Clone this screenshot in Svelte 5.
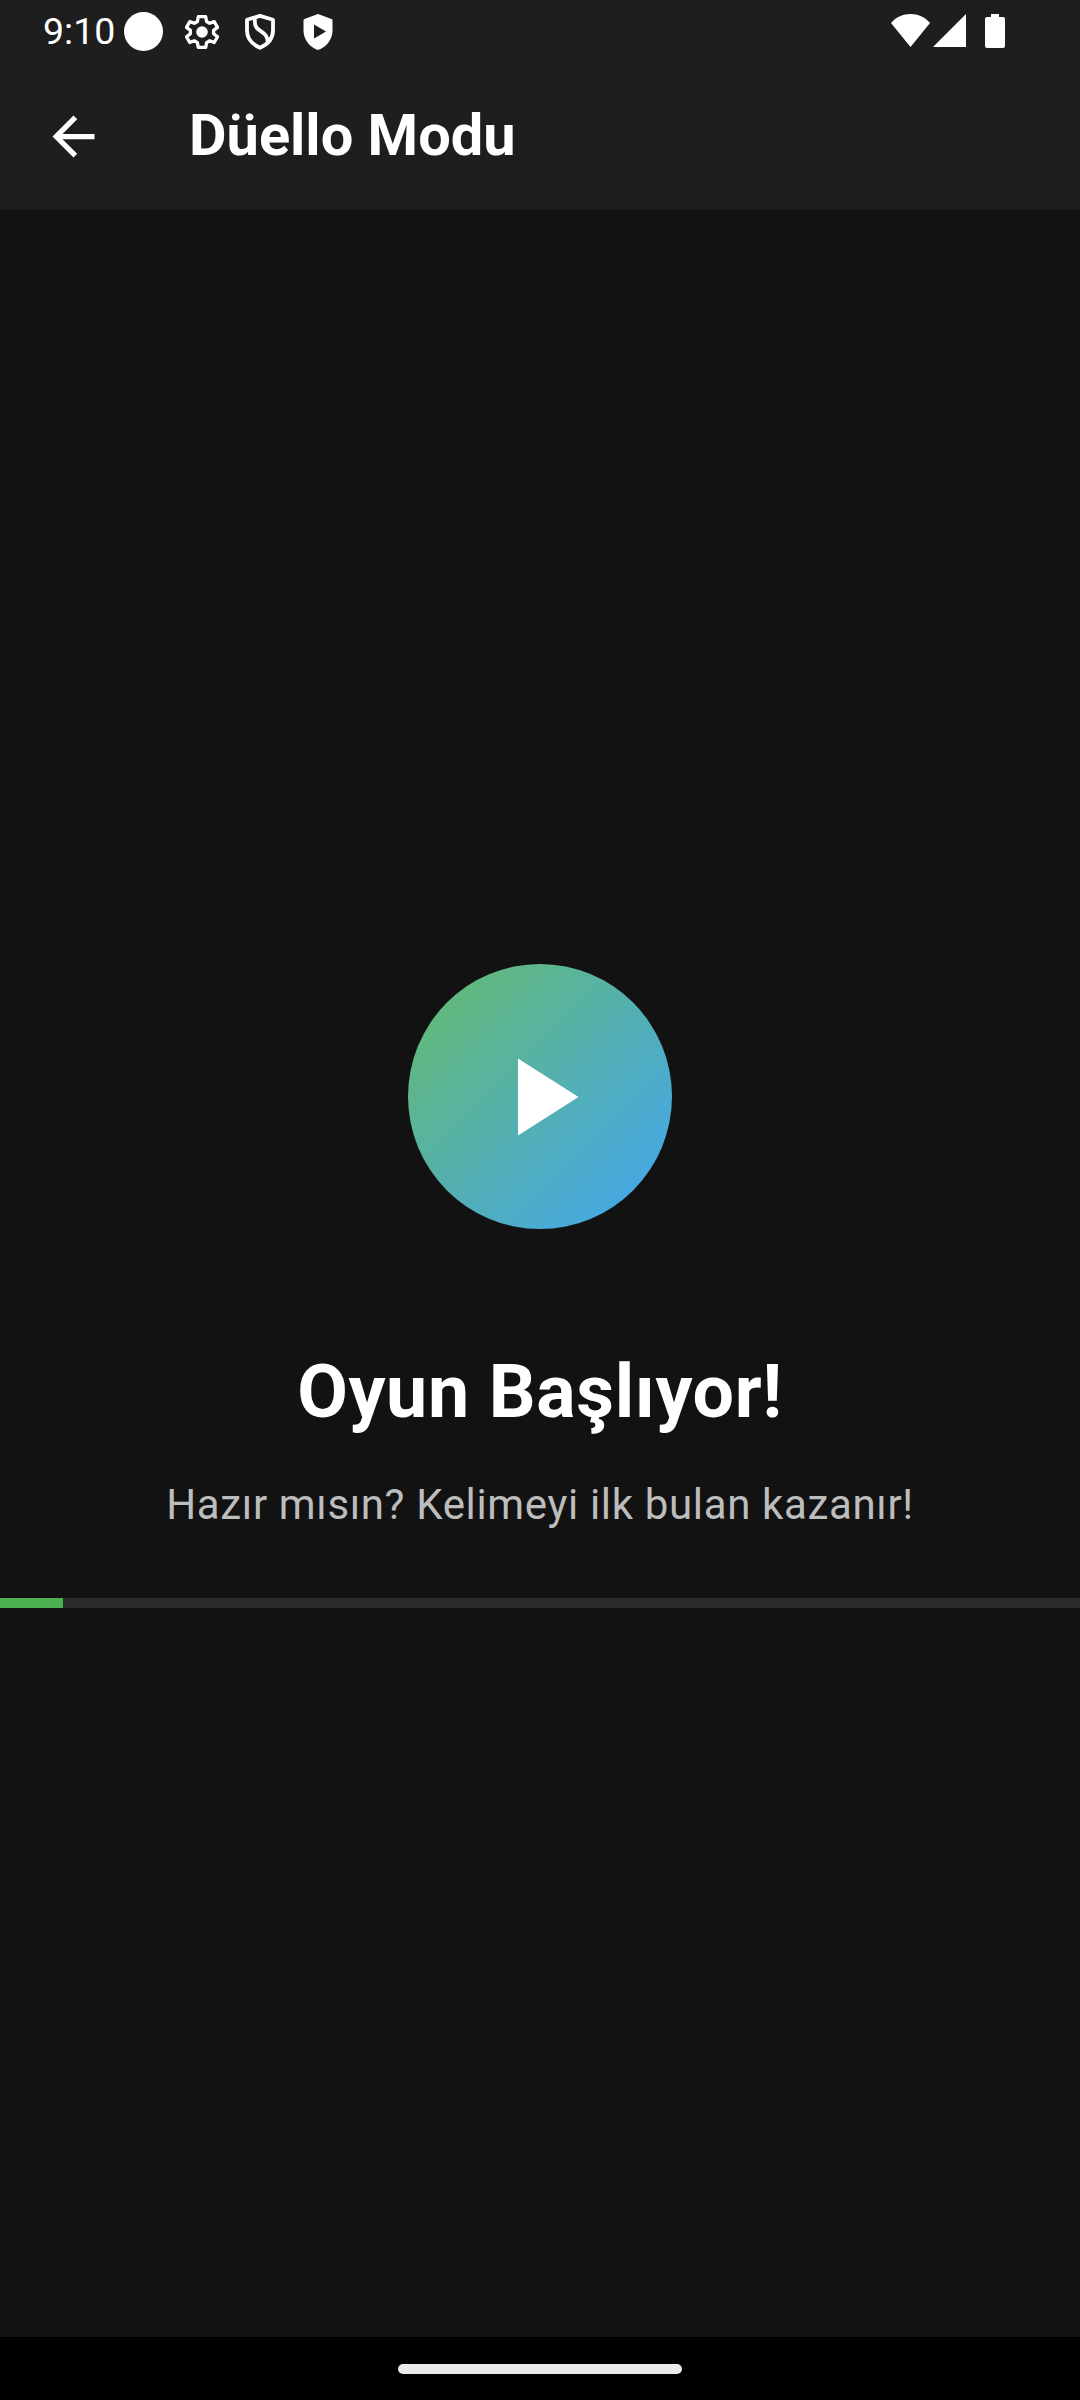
<script lang="ts">
  const title = 'Düello Modu';
  const heading = 'Oyun Başlıyor!';
  const message = 'Hazır mısın? Kelimeyi ilk bulan kazanır!';
  const progress = 5.833;
</script>

<div class="screen">
  <header>
    <div class="status">
      <span class="time">9:10</span>
      <svg class="dot" viewBox="0 0 39 39"><circle cx="19.5" cy="19.5" r="19.5" /></svg>
      <svg class="gear" viewBox="0 0 34 34">
        <path d="M13.3 1.7h7.4l.9 4.8 3.1 1.8 4.5-1.7 3.3 5.8-3.9 3v3.300l3.900 3-3.300 5.800-4.500-1.700-3.100 1.800-.900 4.800h-7.400l-.900-4.800-3.100-1.800-4.500 1.700-3.300-5.800 3.900-3v-3.300l-3.900-3 3.300-5.800 4.500 1.700 3.100-1.800z" />
        <circle cx="17" cy="17" r="5.8" />
      </svg>
      <svg class="shield" viewBox="0 0 30 36">
        <path d="M15 1.900 2 5.700v10.800C2 24.500 6.500 30 15 33.800c8.500-3.800 13-9.300 13-17.300V5.700z" />
        <path d="M9.800 3.500v4c0 9 7 8.500 11 14 2 3 2.200 4 1.700 7.500" />
      </svg>
      <svg class="play-shield" viewBox="0 0 30 36">
        <path d="M15 0 1.500 5Q.5 5.400.5 6.500v10C.5 25.500 6.500 33 15 36c8.500-3 14.500-10.500 14.500-19.500v-10q0-1.100-1-1.500zM11 10.500l12 7-12 7z" fill-rule="evenodd" />
      </svg>
      <span class="grow"></span>
      <svg class="wifi" viewBox="0 0 39 33"><path d="M0 9C5 3 12 0 19.500 0S34 3 39 9L19.500 33z" /></svg>
      <svg class="signal" viewBox="0 0 33 33"><path d="M33 0v33H0z" /></svg>
      <svg class="battery" viewBox="0 0 20 34"><path d="M6 0h8v3h4q2 0 2 2v27q0 2-2 2H2q-2 0-2-2V5q0-2 2-2h4z" /></svg>
    </div>
    <div class="bar">
      <svg class="back" viewBox="0 0 24 24"><path d="M20 11H7.830l5.590-5.590L12 4l-8 8 8 8 1.410-1.410L7.830 13H20z" /></svg>
      <h1>{title}</h1>
    </div>
  </header>
  <main>
    <div class="orb"><svg viewBox="0 0 24 24"><path d="M8 5v14l11-7z" /></svg></div>
    <h2>{heading}</h2>
    <p>{message}</p>
    <div class="track"><div class="fill" style="width: {progress}%"></div></div>
  </main>
  <footer><div class="pill"></div></footer>
</div>

<style>
  :global(body) { margin: 0; background: #121212; }
  .screen { width: 1080px; height: 2400px; display: flex; flex-direction: column; background: #121212; color: #fff; font-family: Roboto, sans-serif; }
  svg { display: block; fill: #fff; flex: none; }
  header { height: 210px; background: #1e1e1e; }
  .status { height: 63px; display: flex; align-items: flex-start; box-sizing: border-box; padding: 12px 75px 0 43px; }
  .time { width: 81px; font-size: 37.500px; line-height: 38px; white-space: nowrap; }
  .dot { width: 39px; height: 39px; }
  .gear { width: 34px; height: 34px; margin: 3px 0 0 22px; }
  .gear path { fill: none; stroke: #fff; stroke-width: 3.300; stroke-linejoin: round; }
  .shield { width: 30px; height: 36px; margin: 1.500px 0 0 26px; }
  .shield path { fill: none; stroke: #fff; stroke-width: 3.800; stroke-linejoin: round; }
  .play-shield { width: 30px; height: 36px; margin: 1.500px 0 0 28px; }
  .grow { flex: 1; }
  .wifi { width: 39px; height: 33px; margin: 2px 3px 0 0; }
  .signal { width: 33px; height: 33px; margin: 2px 19px 0 0; }
  .battery { width: 20px; height: 34px; margin-top: 2px; }
  .bar { height: 147px; display: flex; align-items: center; padding-left: 42px; }
  .back { width: 63px; height: 63px; }
  h1, h2, p { margin: 0; white-space: nowrap; }
  h1 { margin: 0 0 4px 84px; font-size: 57.750px; line-height: 70px; font-weight: 700; }
  main { flex: 1; display: flex; flex-direction: column; align-items: center; padding-top: 754px; }
  .orb { width: 264px; height: 265px; border-radius: 50%; background: linear-gradient(135deg, #66bb6a, #42a5f5); display: flex; align-items: center; justify-content: center; }
  .orb svg { width: 132px; height: 132px; }
  h2 { margin-top: 120px; font-size: 73.500px; line-height: 86px; font-weight: 700; letter-spacing: 0.656px; }
  p { margin-top: 45px; font-size: 42px; line-height: 50px; letter-spacing: 0.656px; color: #bdbdbd; }
  .track { width: 100%; height: 10px; margin-top: 68px; background: #2a2a2a; }
  .fill { height: 100%; background: #4caf50; }
  footer { height: 63px; background: #000; display: flex; align-items: center; justify-content: center; }
  .pill { width: 284px; height: 10px; border-radius: 5px; background: #ebebeb; }
</style>
